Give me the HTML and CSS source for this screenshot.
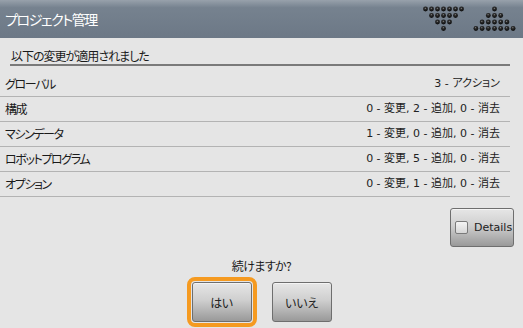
FILE: index.html
```html
<!DOCTYPE html>
<html lang="ja">
<head>
    <meta charset="UTF-8">
    <meta name="viewport" content="width=device-width, initial-scale=1.0">
    <title>プロジェクト管理</title>
    <link rel="stylesheet" href="styles.css">
</head>
<body>
    <div class="window">
        <header class="titlebar">
            <h1>プロジェクト管理</h1>
            <!-- scroll up / down dot arrows -->
            <svg class="dot-arrows" width="96" height="30" viewBox="0 0 96 30">
                <defs>
                    <radialGradient id="dot" cx="45%" cy="35%" r="60%">
                        <stop offset="0%" stop-color="#9a9a9a"/>
                        <stop offset="30%" stop-color="#2e2e2e"/>
                        <stop offset="100%" stop-color="#0c0c0c"/>
                    </radialGradient>
                </defs>
                <g fill="url(#dot)">
                    <circle cx="3.5" cy="5" r="2.4"/><circle cx="9.5" cy="5" r="2.4"/><circle cx="15.5" cy="5" r="2.4"/><circle cx="21.5" cy="5" r="2.4"/><circle cx="27.5" cy="5" r="2.4"/><circle cx="33.5" cy="5" r="2.4"/><circle cx="39.5" cy="5" r="2.4"/>
                    <circle cx="9.5" cy="11.5" r="2.4"/><circle cx="15.5" cy="11.5" r="2.4"/><circle cx="21.5" cy="11.5" r="2.4"/><circle cx="27.5" cy="11.5" r="2.4"/><circle cx="33.5" cy="11.5" r="2.4"/>
                    <circle cx="15.5" cy="18" r="2.4"/><circle cx="21.5" cy="18" r="2.4"/><circle cx="27.5" cy="18" r="2.4"/>
                    <circle cx="21.5" cy="24.5" r="2.4"/>

                    <circle cx="72.5" cy="5" r="2.4"/>
                    <circle cx="66.3" cy="11.5" r="2.4"/><circle cx="72.5" cy="11.5" r="2.4"/><circle cx="78.7" cy="11.5" r="2.4"/>
                    <circle cx="60.1" cy="18" r="2.4"/><circle cx="66.3" cy="18" r="2.4"/><circle cx="72.5" cy="18" r="2.4"/><circle cx="78.7" cy="18" r="2.4"/><circle cx="84.9" cy="18" r="2.4"/>
                    <circle cx="53.9" cy="24.5" r="2.4"/><circle cx="60.1" cy="24.5" r="2.4"/><circle cx="66.3" cy="24.5" r="2.4"/><circle cx="72.5" cy="24.5" r="2.4"/><circle cx="78.7" cy="24.5" r="2.4"/><circle cx="84.9" cy="24.5" r="2.4"/><circle cx="91.1" cy="24.5" r="2.4"/>
                </g>
            </svg>
        </header>

        <main class="content">
            <div class="summary-head">以下の変更が適用されました</div>

            <table class="changes">
                <tbody>
                    <tr><td>グローバル</td><td class="count">3 - アクション</td></tr>
                    <tr><td>構成</td><td class="count">0 - 変更, 2 - 追加, 0 - 消去</td></tr>
                    <tr><td>マシンデータ</td><td class="count">1 - 変更, 0 - 追加, 0 - 消去</td></tr>
                    <tr><td>ロボットプログラム</td><td class="count">0 - 変更, 5 - 追加, 0 - 消去</td></tr>
                    <tr><td>オプション</td><td class="count">0 - 変更, 1 - 追加, 0 - 消去</td></tr>
                </tbody>
            </table>

            <div class="details-row">
                <button class="btn details-btn"><span class="check"></span>Details</button>
            </div>

            <p class="question">続けますか?</p>

            <div class="actions">
                <button class="btn action-btn focused">はい</button>
                <button class="btn action-btn">いいえ</button>
            </div>
        </main>
    </div>
</body>
</html>
```

FILE: styles.css
```css
body {
    margin: 0;
    padding: 0;
    background-color: #e5e5e5;
    font-family: "Noto Sans CJK JP", "DejaVu Sans", sans-serif;
    font-feature-settings: "palt";
    color: #1a1a1a;
}
.window {
    width: 523px;
    height: 328px;
    overflow: hidden;
}
.titlebar {
    height: 38px;
    display: flex;
    align-items: center;
    background: linear-gradient(to bottom, #98a1ab 0%, #76828f 20%, #6c7886 100%);
}
.titlebar h1 {
    margin: 0 0 0 5px;
    font-size: 14px;
    font-weight: normal;
    color: white;
    letter-spacing: -1.4px;
}
.dot-arrows {
    margin-left: auto;
    margin-right: 5px;
}
.content {
    display: flex;
    flex-direction: column;
}
.summary-head {
    margin: 0 13px 0 10px;
    padding: 10px 0 0 1px;
    line-height: 16px;
    font-size: 12px;
    letter-spacing: -1px;
    border-bottom: 2px solid #7a7a7a;
}
.changes {
    width: 510px;
    margin-top: 6px;
    border-collapse: collapse;
    font-size: 12px;
}
.changes td {
    height: 24px;
    padding: 0 0 0 5px;
    border-bottom: 1px solid #b3b3b3;
    line-height: 24px;
    letter-spacing: -1.4px;
}
.changes td.count {
    text-align: right;
    padding: 0 10px 0 0;
    font-family: "DejaVu Sans", "Noto Sans CJK JP", sans-serif;
    font-size: 11px;
    letter-spacing: 0;
    color: #222;
}
.btn {
    border: 1px solid #6e6e6e;
    border-radius: 3px;
    background: linear-gradient(to bottom, #e6e6e6 0%, #cfcfcf 45%, #999999 100%);
    box-shadow: inset 0 1px 0 #f4f4f4;
    font-family: "Noto Sans CJK JP", "DejaVu Sans", sans-serif;
    color: #222;
    padding: 0;
    cursor: pointer;
}
.details-row {
    display: flex;
    justify-content: flex-end;
    margin-top: 11px;
    padding-right: 9px;
}
.details-btn {
    width: 64px;
    height: 39px;
    display: flex;
    align-items: center;
    gap: 6px;
    padding-left: 4px;
    font-family: "DejaVu Sans", sans-serif;
    font-size: 11px;
}
.check {
    width: 11px;
    height: 11px;
    border: 1px solid #7a7a7a;
    border-radius: 2px;
    background: linear-gradient(to bottom, #f4f4f4, #d6d6d6);
}
.question {
    margin: 11px 0 0 0;
    text-align: center;
    font-size: 12px;
    line-height: 16px;
    letter-spacing: -0.6px;
}
.actions {
    display: flex;
    justify-content: center;
    gap: 20px;
    margin-top: 8px;
}
.action-btn {
    width: 60px;
    height: 40px;
    font-size: 12px;
    letter-spacing: -0.8px;
}
.action-btn.focused {
    outline: 4px solid #f59a20;
    outline-offset: 1px;
}
```
